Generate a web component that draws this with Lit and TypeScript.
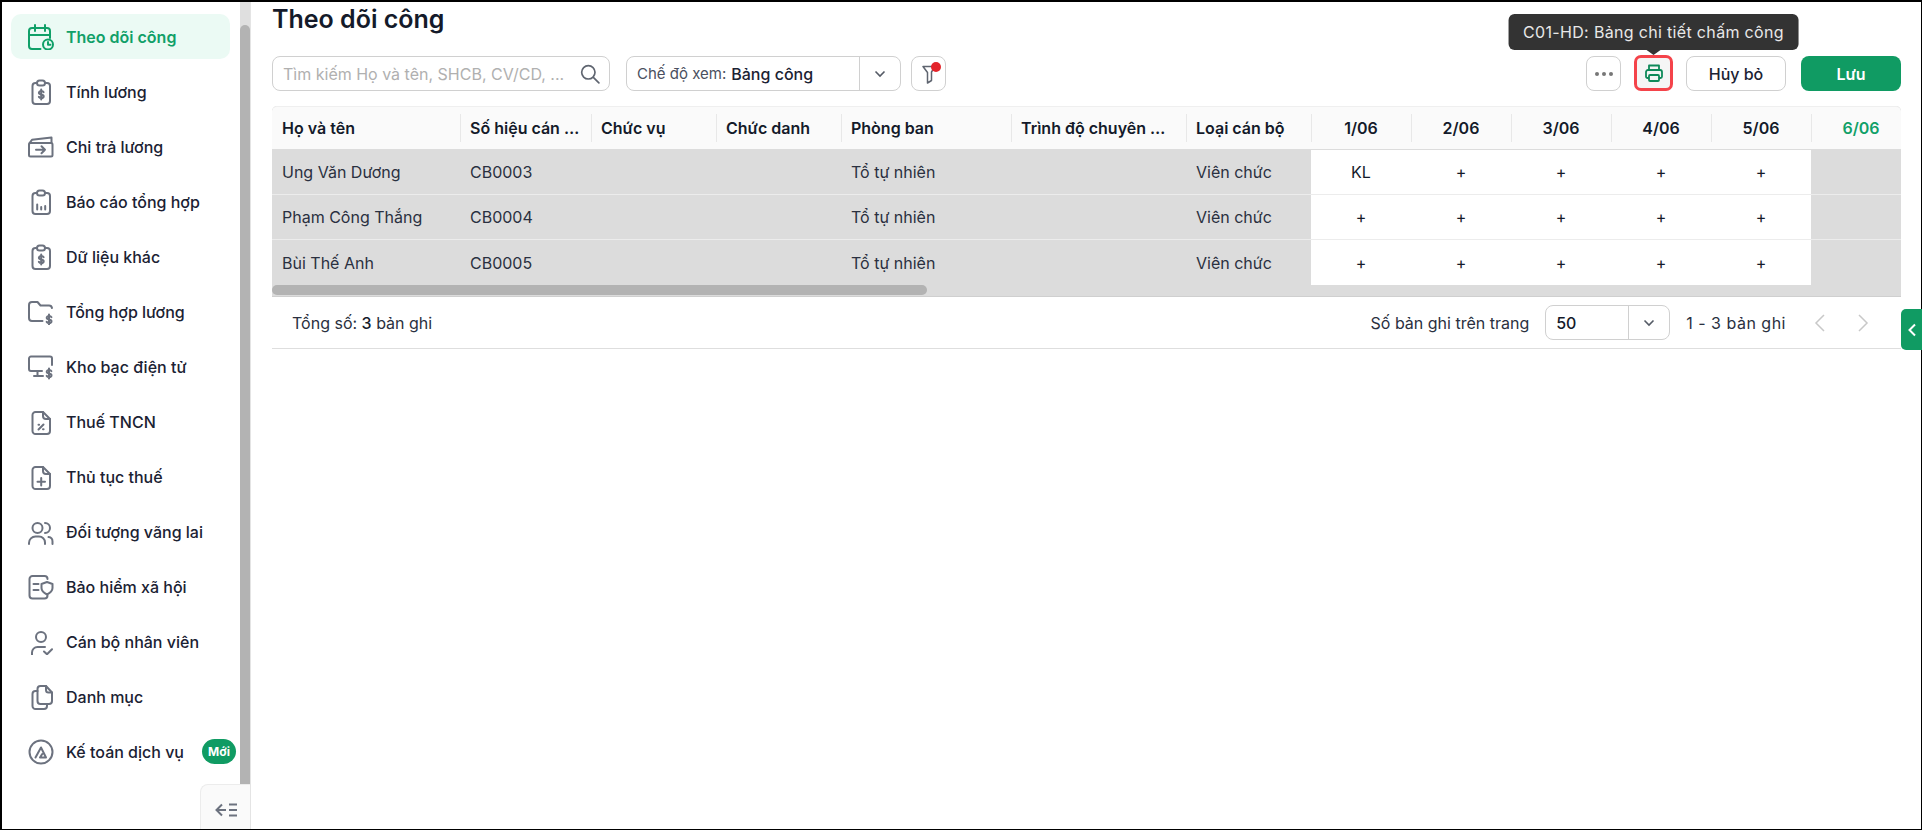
import { LitElement, html, css, svg } from 'lit';
import { customElement } from 'lit/decorators.js';

const smallDollar = (x: number, y: number) => svg`
  <path transform="translate(${x} ${y})" d="M2.4-2.4c-.4-.8-1.2-1.1-2.3-1.1-1.4 0-2.4.7-2.4 1.8 0 2.4 4.8 1.1 4.8 3.5 0 1.1-1 1.8-2.4 1.8-1.1 0-1.9-.4-2.4-1.2M0-5v10" />`;

const icons: Record<string, unknown> = {
  calendar: svg`
    <path d="M12.5 25H4a3 3 0 0 1-3-3V7a3 3 0 0 1 3-3h15a3 3 0 0 1 3 3v7" />
    <path d="M1 11h21M7 1v6M17 1v6" />
    <circle cx="20" cy="20.5" r="5" />
    <path d="M20 18v2.7h2.4" />`,
  clipDollar: svg`
    <rect x="4.5" y="4" width="17.5" height="21" rx="3" />
    <rect x="9" y="1.5" width="8" height="5" rx="2.5" fill="#fff" />
    ${smallDollar(13.2, 15.5)}`,
  wallet: svg`
    <rect x="1" y="9" width="23.5" height="13.5" rx="1.5" />
    <path d="M1.5 9 4 5.8 23.5 3.5V9" />
    <path d="M8 15.7h9M13.5 12.2l3.5 3.5-3.5 3.5" />`,
  clipChart: svg`
    <rect x="4.5" y="4" width="17.5" height="21" rx="3" />
    <rect x="9" y="1.5" width="8" height="5" rx="2.5" fill="#fff" />
    <path d="M9.2 20.5v-5M13.2 20.5v-2.5M17.2 20.5v-3.5" />`,
  folder: svg`
    <path d="M14.5 22H4a3 3 0 0 1-3-3V6a3 3 0 0 1 3-3h5.5l3 3.5H21a3 3 0 0 1 3 2.5" />
    ${smallDollar(21, 20.5)}`,
  monitor: svg`
    <path d="M14 17H3a2 2 0 0 1-2-2V4.500a2 2 0 0 1 2-2h19a2 2 0 0 1 2 2V11" />
    <path d="M9.500 17v5M6 22h9" />
    ${smallDollar(21, 19.5)}`,
  docPercent: svg`
    <path d="M4.500 6a3 3 0 0 1 3-3H15l7 7v12a3 3 0 0 1-3 3H7.500a3 3 0 0 1-3-3Z" />
    <path d="M15 3v4a3 3 0 0 0 3 3h4" />
    <path d="M10.500 20.500l5-5M10.500 15.800h.6M15 20.200h.6" />`,
  docPlus: svg`
    <path d="M4.500 6a3 3 0 0 1 3-3H15l7 7v12a3 3 0 0 1-3 3H7.500a3 3 0 0 1-3-3Z" />
    <path d="M15 3v4a3 3 0 0 0 3 3h4" />
    <path d="M13.200 14v7.500M9.500 17.700H17" />`,
  users: svg`
    <circle cx="9.500" cy="9" r="5" />
    <path d="M17 4a5 5 0 0 1 0 10" />
    <path d="M1 25v-1a6.500 6.500 0 0 1 6.500-6.500H11a6 6 0 0 1 6 6V25M20.500 18a4.500 4.500 0 0 1 4 4.500V25" />`,
  shield: svg`
    <path d="M19.500 5a3 3 0 0 0-3-3h-12a3 3 0 0 0-3 3v16.500a3 3 0 0 0 3 3h12a3 3 0 0 0 3-3" />
    <path d="M5.500 10h5M5.500 16h5" />
    <path d="M19 8l5.500 2v4c0 3-2.500 5-5.500 6.500-3-1.500-5.500-3.500-5.500-6.500v-4Z" fill="#fff" />`,
  personCheck: svg`
    <circle cx="13" cy="8" r="5" />
    <path d="M4 26v-2.500a5.500 5.500 0 0 1 5.500-5.500H17" />
    <path d="M16 22.500l3 2.800 5-5" />`,
  copy: svg`
    <path d="M9.500 5a3 3 0 0 1 3-3H18l6 6.500V17a3 3 0 0 1-3 3h-8.500a3 3 0 0 1-3-3Z" />
    <path d="M18 2v4a2.500 2.500 0 0 0 2.500 2.500H24" />
    <path d="M9.500 7H7.500a3 3 0 0 0-3 3v12a3 3 0 0 0 3 3H16a3 3 0 0 0 3-3v-2" />`,
  logo: svg`
    <circle cx="13" cy="13" r="11.500" />
    <path d="M7.500 18.500 13 8.500l5 10h-6l2.200-3.500" />`,
};

const navItems = [
  { label: 'Theo dõi công', icon: 'calendar', active: true },
  { label: 'Tính lương', icon: 'clipDollar' },
  { label: 'Chi trả lương', icon: 'wallet' },
  { label: 'Báo cáo tổng hợp', icon: 'clipChart' },
  { label: 'Dữ liệu khác', icon: 'clipDollar' },
  { label: 'Tổng hợp lương', icon: 'folder' },
  { label: 'Kho bạc điện tử', icon: 'monitor' },
  { label: 'Thuế TNCN', icon: 'docPercent' },
  { label: 'Thủ tục thuế', icon: 'docPlus' },
  { label: 'Đối tượng vãng lai', icon: 'users' },
  { label: 'Bảo hiểm xã hội', icon: 'shield' },
  { label: 'Cán bộ nhân viên', icon: 'personCheck' },
  { label: 'Danh mục', icon: 'copy' },
  { label: 'Kế toán dịch vụ', icon: 'logo', badge: 'Mới' },
];

const infoColumns = [
  'Họ và tên',
  'Số hiệu cán bộ',
  'Chức vụ',
  'Chức danh',
  'Phòng ban',
  'Trình độ chuyên môn',
  'Loại cán bộ',
];
const dayColumns = ['1/06', '2/06', '3/06', '4/06', '5/06'];

const rows = [
  { info: ['Ung Văn Dương', 'CB0003', '', '', 'Tổ tự nhiên', '', 'Viên chức'], days: ['KL', '+', '+', '+', '+'] },
  { info: ['Phạm Công Thắng', 'CB0004', '', '', 'Tổ tự nhiên', '', 'Viên chức'], days: ['+', '+', '+', '+', '+'] },
  { info: ['Bùi Thế Anh', 'CB0005', '', '', 'Tổ tự nhiên', '', 'Viên chức'], days: ['+', '+', '+', '+', '+'] },
];

const chevronDown = html`<svg class="chev" viewBox="0 0 14 14"><path d="M2.500 4.500 7 9l4.500-4.500" /></svg>`;

@customElement('app-root')
export class AppRoot extends LitElement {
  static styles = css`
    :host {
      display: block;
      width: 1922px;
      height: 830px;
      box-sizing: border-box;
      border: 1px solid #000;
      border-left-width: 2px;
      border-top-width: 2px;
      background: #fff;
      font-family: Inter, 'Noto Sans', sans-serif;
      color: #1b2233;
    }
    .layout {
      display: flex;
      height: 100%;
    }

    /* sidebar */
    .sidebar {
      position: relative;
      flex: none;
      width: 248px;
      display: flex;
      border-right: 1px solid #e4e4e4;
      box-sizing: content-box;
    }
    .nav {
      flex: 1;
      padding: 12px 10px 0 9px;
      display: flex;
      flex-direction: column;
      gap: 10px;
    }
    .nav-item {
      height: 45px;
      display: flex;
      align-items: center;
      padding-left: 17px;
      border-radius: 10px;
      font-size: 16px;
      font-weight: 500;
      white-space: nowrap;
    }
    .nav-item span:first-of-type {
      position: relative;
      top: 0.5px;
    }
    .nav-item svg {
      flex: none;
      width: 26px;
      height: 26px;
      margin-right: 12px;
      fill: none;
      stroke: #6c727f;
      stroke-width: 2;
      stroke-linecap: round;
      stroke-linejoin: round;
    }
    .nav-item.active {
      background: #ebfaf4;
      color: #10a068;
      font-weight: 600;
    }
    .nav-item.active svg {
      stroke: #10a068;
    }
    .badge {
      margin-left: auto;
      margin-right: -6px;
      width: 34px;
      height: 25px;
      border-radius: 13px;
      background: #109b63;
      color: #fff;
      font-size: 12px;
      font-weight: 700;
      display: flex;
      align-items: center;
      justify-content: center;
    }
    .side-scroll {
      flex: none;
      width: 10px;
      background: #dfdfdf;
      padding-top: 23px;
      box-sizing: border-box;
    }
    .side-scroll div {
      height: 759px;
      background: #b3b3b3;
      border-radius: 5px 5px 0 0;
    }
    .collapse {
      position: absolute;
      right: 0;
      bottom: 0;
      width: 49px;
      height: 44px;
      box-sizing: content-box;
      background: #fafafa;
      border: 1px solid #ececec;
      border-right: none;
      border-bottom: none;
      border-radius: 8px 0 0 0;
      display: flex;
      align-items: center;
      justify-content: center;
    }
    .collapse svg {
      width: 22px;
      height: 14px;
      margin-top: 5px;
      fill: none;
      stroke: #6c727f;
      stroke-width: 2;
    }

    /* main */
    .main {
      position: relative;
      flex: 1;
      min-width: 0;
      padding: 0 20px 0 21px;
    }
    h1 {
      margin: 0;
      height: 54px;
      padding-top: 1px;
      box-sizing: border-box;
      font-size: 25px;
      line-height: 32px;
      font-weight: 600;
      color: #141a2a;
    }
    .toolbar {
      display: flex;
      align-items: center;
      height: 35px;
      margin-bottom: 15px;
    }
    .box {
      box-sizing: border-box;
      height: 35px;
      border: 1px solid #d0d0d0;
      border-radius: 8px;
      background: #fff;
      display: flex;
      align-items: center;
      font-size: 16px;
    }
    .search {
      width: 338px;
      padding: 0 9px 0 10px;
      justify-content: space-between;
      color: #b0b0b0;
    }
    .search svg {
      width: 20px;
      height: 20px;
      fill: none;
      stroke: #5f6570;
      stroke-width: 1.500;
      stroke-linecap: round;
    }
    .view {
      width: 275px;
      margin-left: 16px;
      padding-left: 10px;
    }
    .view .key {
      color: #4a5060;
      font-size: 15px;
    }
    .view .value {
      margin-left: 5px;
      color: #1b2233;
      font-weight: 500;
    }
    .select-arrow {
      margin-left: auto;
      width: 40px;
      height: 100%;
      border-left: 1px solid #d0d0d0;
      display: flex;
      align-items: center;
      justify-content: center;
    }
    .chev {
      width: 14px;
      height: 14px;
      fill: none;
      stroke: #555b66;
      stroke-width: 1.600;
    }
    .icon-btn {
      position: relative;
      justify-content: center;
      width: 35px;
    }
    .filter {
      margin-left: 10px;
    }
    .filter svg {
      width: 16px;
      height: 20px;
      fill: none;
      stroke: #5f6570;
      stroke-width: 1.500;
      stroke-linejoin: round;
    }
    .filter i {
      position: absolute;
      top: 5px;
      right: 4px;
      width: 10px;
      height: 10px;
      border-radius: 50%;
      background: #e3242b;
    }
    .spacer {
      flex: 1;
    }
    .dots {
      gap: 3px;
    }
    .dots i {
      width: 4px;
      height: 4px;
      border-radius: 50%;
      background: #777;
    }
    .print {
      margin: -1px 13px 0;
      width: 39px;
      height: 36px;
      border: 3px solid #f4434a;
      border-radius: 7px;
      background: #f5f5f5;
    }
    .print svg {
      width: 20px;
      height: 20px;
      fill: none;
      stroke: #0f8a5a;
      stroke-width: 1.800;
      stroke-linejoin: round;
    }
    .tooltip {
      position: absolute;
      left: 50%;
      bottom: calc(100% + 8px);
      transform: translateX(-50%);
      height: 36px;
      padding: 0 15px;
      border-radius: 6px;
      background: #333;
      color: #e8e8e8;
      font-size: 16px;
      letter-spacing: 0.33px;
      display: flex;
      align-items: center;
      white-space: nowrap;
    }
    .tooltip::after {
      content: '';
      position: absolute;
      left: 50%;
      top: 100%;
      margin-left: -7px;
      border: 7px solid transparent;
      border-top: 5px solid #333;
      border-bottom: none;
    }
    .btn {
      box-sizing: border-box;
      width: 100px;
      height: 35px;
      border-radius: 8px;
      display: flex;
      align-items: center;
      justify-content: center;
      font-size: 16px;
      font-weight: 500;
    }
    .btn.cancel {
      border: 1px solid #d0d0d0;
    }
    .btn.save {
      margin-left: 15px;
      background: #109b63;
      color: #fff;
      font-weight: 600;
    }

    /* table */
    .table {
      background: #dcdcdc;
      border-bottom: 1px solid #cfcfcf;
      border-radius: 5px 5px 0 0;
      overflow: hidden;
    }
    .tr {
      display: grid;
      grid-template-columns: 188px 131px 125px 125px 170px 175px 125px 100px 100px 100px 100px 100px 100px;
    }
    .head {
      height: 43px;
      background: #fafafa;
      border-top: 1px solid #efefef;
      border-radius: 5px 5px 0 0;
      box-sizing: border-box;
      margin-bottom: 1px;
      font-size: 16px;
      font-weight: 600;
      color: #141a2a;
    }
    .th {
      position: relative;
      display: flex;
      align-items: center;
      padding: 0 10px;
      min-width: 0;
    }
    .th + .th::before {
      content: '';
      position: absolute;
      left: 0;
      top: 7px;
      bottom: 7px;
      width: 1px;
      background: #e8e8e8;
    }
    .th span,
    .td span {
      overflow: hidden;
      text-overflow: ellipsis;
      white-space: nowrap;
    }
    .th.day,
    .td.day {
      justify-content: center;
    }
    .th.today {
      color: #10a068;
    }
    .row {
      height: 45px;
      box-sizing: border-box;
      border-bottom: 1px solid #ececec;
      font-size: 16px;
      color: #2a3040;
    }
    .row.last {
      border-bottom: none;
    }
    .td {
      display: flex;
      align-items: center;
      padding: 0 10px;
      min-width: 0;
    }
    .td.day {
      background: #fff;
    }
    .td.mark {
      color: #141a2a;
    }
    .hscroll {
      height: 11px;
      padding-bottom: 1px;
      box-sizing: border-box;
    }
    .hscroll div {
      width: 655px;
      height: 10px;
      border-radius: 5px;
      background: #b3b3b3;
    }

    /* footer */
    .footer {
      height: 51px;
      border-bottom: 1px solid #dedede;
      display: flex;
      align-items: center;
      padding: 0 0 0 20px;
      font-size: 16px;
      color: #2a3040;
    }
    .footer strong {
      font-weight: 500;
      color: #141a2a;
    }
    .page-size {
      width: 125px;
      margin: 0 16px;
      padding-left: 10px;
      color: #141a2a;
      font-weight: 500;
    }
    .page-size .select-arrow {
      width: 40px;
    }
    .range {
      letter-spacing: 0.5px;
    }
    .pager {
      display: flex;
      gap: 27px;
      margin: 0 30px 0 26px;
    }
    .pager svg {
      width: 16px;
      height: 20px;
      fill: none;
      stroke: #c8c8c8;
      stroke-width: 1.500;
    }
    .side-tab {
      position: absolute;
      top: 307px;
      right: -1px;
      width: 21px;
      height: 41px;
      border-radius: 5px 0 0 5px;
      background: #109b63;
      display: flex;
      align-items: center;
      justify-content: center;
    }
    .side-tab svg {
      width: 10px;
      height: 14px;
      fill: none;
      stroke: #fff;
      stroke-width: 2;
    }
  `;

  private renderNav() {
    return navItems.map(
      (item) => html`
        <div class="nav-item ${item.active ? 'active' : ''}">
          <svg viewBox="0 0 26 26">${icons[item.icon]}</svg>
          <span>${item.label}</span>
          ${item.badge ? html`<span class="badge">${item.badge}</span>` : ''}
        </div>
      `
    );
  }

  private renderToolbar() {
    return html`
      <div class="toolbar">
        <div class="box search">
          <span>Tìm kiếm Họ và tên, SHCB, CV/CD, ...</span>
          <svg viewBox="0 0 18 18"><circle cx="7.500" cy="7.500" r="6" /><path d="m12 12 5 5" /></svg>
        </div>
        <div class="box view">
          <span class="key">Chế độ xem:</span>
          <span class="value">Bảng công</span>
          <span class="select-arrow">${chevronDown}</span>
        </div>
        <div class="box icon-btn filter">
          <svg viewBox="0 0 16 20"><path d="M2 2.500h12L10.500 8v8.500l-4 2.500V8.500Z" /></svg>
          <i></i>
        </div>
        <div class="spacer"></div>
        <div class="box icon-btn dots"><i></i><i></i><i></i></div>
        <div class="box icon-btn print">
          <svg viewBox="0 0 20 20">
            <path d="M5 7V2.500h10V7" />
            <path d="M5 15H3.500A1.500 1.500 0 0 1 2 13.500V9a2 2 0 0 1 2-2h12a2 2 0 0 1 2 2v4.500a1.500 1.500 0 0 1-1.500 1.500H15" />
            <rect x="5" y="12" width="10" height="6" rx="1" />
          </svg>
          <div class="tooltip">C01-HD: Bảng chi tiết chấm công</div>
        </div>
        <div class="btn cancel">Hủy bỏ</div>
        <div class="btn save">Lưu</div>
      </div>
    `;
  }

  private renderTable() {
    return html`
      <div class="table">
        <div class="tr head">
          ${infoColumns.map((c) => html`<div class="th"><span>${c}</span></div>`)}
          ${dayColumns.map((c) => html`<div class="th day"><span>${c}</span></div>`)}
          <div class="th day today"><span>6/06</span></div>
        </div>
        ${rows.map(
          (r, i) => html`
            <div class="tr row ${i === rows.length - 1 ? 'last' : ''}">
              ${r.info.map((v) => html`<div class="td"><span>${v}</span></div>`)}
              ${r.days.map((v) => html`<div class="td day mark"><span>${v}</span></div>`)}
              <div class="td"></div>
            </div>
          `
        )}
        <div class="hscroll"><div></div></div>
      </div>
    `;
  }

  private renderFooter() {
    return html`
      <div class="footer">
        <span>Tổng số: <strong>3</strong> bản ghi</span>
        <div class="spacer"></div>
        <span>Số bản ghi trên trang</span>
        <div class="box page-size">50<span class="select-arrow">${chevronDown}</span></div>
        <span class="range">1 - 3 bản ghi</span>
        <div class="pager">
          <svg viewBox="0 0 16 20"><path d="M12 2 4 10l8 8" /></svg>
          <svg viewBox="0 0 16 20"><path d="m4 2 8 8-8 8" /></svg>
        </div>
      </div>
    `;
  }

  render() {
    return html`
      <div class="layout">
        <aside class="sidebar">
          <nav class="nav">${this.renderNav()}</nav>
          <div class="side-scroll"><div></div></div>
          <div class="collapse">
            <svg viewBox="0 0 22 14">
              <path d="M7 1.500 1.500 7 7 12.500M2 7h9M14 1.500h8M14 7h8M14 12.500h8" />
            </svg>
          </div>
        </aside>
        <main class="main">
          <h1>Theo dõi công</h1>
          ${this.renderToolbar()} ${this.renderTable()} ${this.renderFooter()}
          <div class="side-tab">
            <svg viewBox="0 0 10 14"><path d="M8 1.500 2.500 7 8 12.500" /></svg>
          </div>
        </main>
      </div>
    `;
  }
}
